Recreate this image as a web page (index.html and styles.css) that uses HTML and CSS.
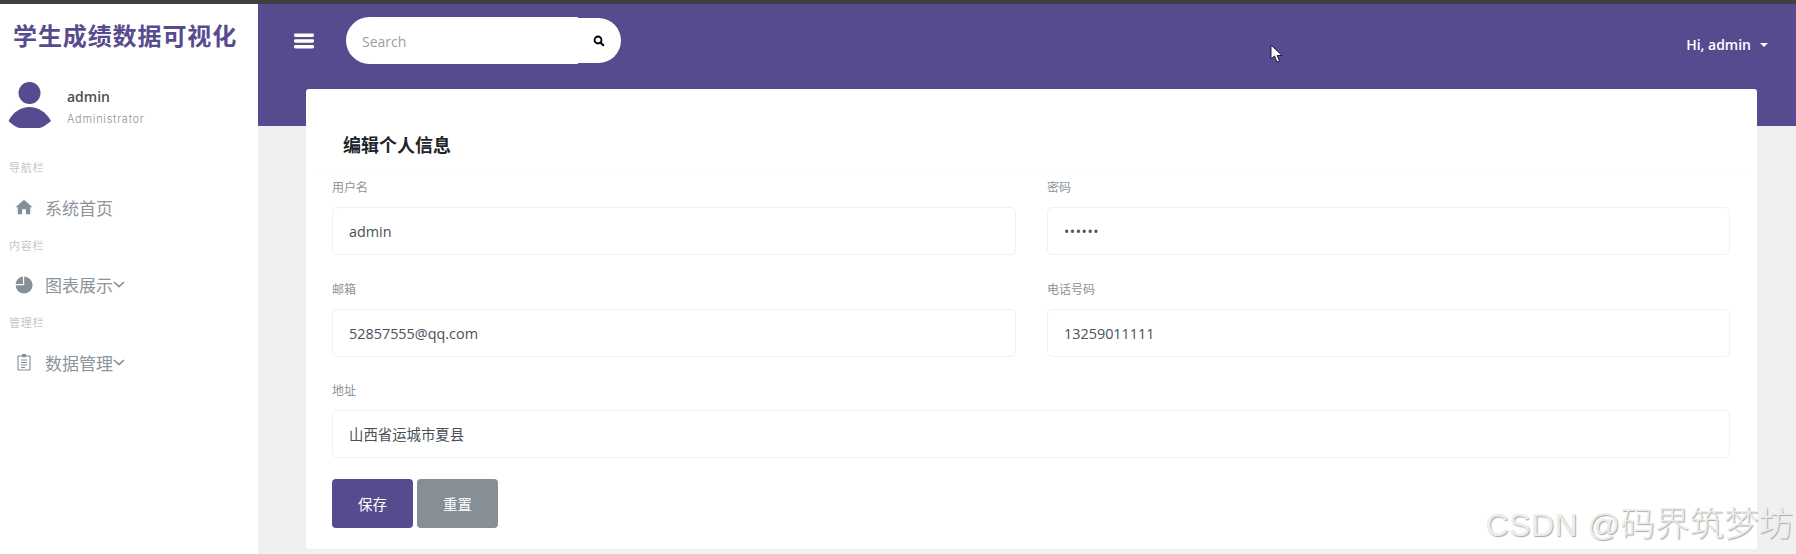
FILE: index.html
```html
<!DOCTYPE html>
<html lang="zh-CN">
<head>
    <meta charset="UTF-8">
    <title>学生成绩数据可视化</title>
    <link rel="stylesheet" href="styles.css">
</head>
<body>

<div class="topline"></div>

<div class="wrapper">
    <!-- Sidebar -->
    <aside class="sidebar">
        <div class="brand">学生成绩数据可视化</div>
        <div class="user">
            <svg class="avatar" width="44" height="48" viewBox="0 0 44 48">
                <circle cx="21.5" cy="13" r="11" fill="#574b90"/>
                <path d="M0.5 41 C5 32 13 27 21.5 27 C30 27 38 32 43 41 C38 45 34 48 31 48 L12 48 C9 48 5 45 0.5 41 Z" fill="#574b90"/>
            </svg>
            <div class="user-info">
                <div class="user-name">admin</div>
                <div class="user-role">Administrator</div>
            </div>
        </div>

        <div class="nav-title">导航栏</div>
        <a class="nav-item">
            <svg class="nav-icon" viewBox="0 0 16 16"><path d="M8 1.5 L15.5 8.2 L13.6 8.2 L13.6 14.5 L9.7 14.5 L9.7 10 L6.3 10 L6.3 14.5 L2.4 14.5 L2.4 8.2 L0.5 8.2 Z" fill="#868e96"/></svg>
            <span>系统首页</span>
        </a>

        <div class="nav-title">内容栏</div>
        <a class="nav-item">
            <svg class="nav-icon" viewBox="0 0 18 18"><path d="M9.2 0.6 A8.5 8.5 0 1 1 0.6 9.3 L9.2 9.3 Z M7.9 0.6 L7.9 8 L0.6 8 A8 8 0 0 1 7.9 0.6 Z" fill="#868e96"/></svg>
            <span>图表展示</span>
            <svg class="chevron" width="12" height="7" viewBox="0 0 12 7"><path d="M1 1 L6 5.6 L11 1" fill="none" stroke="#868e96" stroke-width="1.6"/></svg>
        </a>

        <div class="nav-title">管理栏</div>
        <a class="nav-item">
            <svg class="nav-icon" viewBox="0 0 16 18"><path d="M2 3 H14 V17 H2 Z M5 7 H11 M5 9.5 H11 M5 12 H11 M5 14.5 H9" fill="none" stroke="#868e96" stroke-width="1.1"/><rect x="6" y="1" width="4" height="3.2" fill="#868e96"/></svg>
            <span>数据管理</span>
            <svg class="chevron" width="12" height="7" viewBox="0 0 12 7"><path d="M1 1 L6 5.6 L11 1" fill="none" stroke="#868e96" stroke-width="1.6"/></svg>
        </a>
    </aside>

    <!-- Main -->
    <main class="main">
        <header class="panel-header">
            <div class="header-left">
                <svg class="menu-icon" width="20" height="16" viewBox="0 0 20 16">
                    <rect x="0" y="0.5" width="20" height="3.4" rx="1.4" fill="#fff"/>
                    <rect x="0" y="6.3" width="20" height="3.4" rx="1.4" fill="#fff"/>
                    <rect x="0" y="12.1" width="20" height="3.4" rx="1.4" fill="#fff"/>
                </svg>
                <div class="search">
                    <div class="search-input">Search</div>
                    <div class="search-btn">
                        <svg width="12" height="12" viewBox="0 0 12 12"><circle cx="5" cy="5" r="3.5" fill="none" stroke="#000" stroke-width="1.8"/><path d="M7.5 7.5 L10.8 10.8" stroke="#000" stroke-width="2.2"/></svg>
                    </div>
                </div>
            </div>
            <div class="header-user">Hi, admin<span class="caret"></span></div>
        </header>

        <section class="card">
            <h1 class="card-title">编辑个人信息</h1>
            <form class="form-grid">
                <div class="field">
                    <label>用户名</label>
                    <div class="input">admin</div>
                </div>
                <div class="field">
                    <label>密码</label>
                    <div class="input input-dots">••••••</div>
                </div>
                <div class="field">
                    <label>邮箱</label>
                    <div class="input">52857555@qq.com</div>
                </div>
                <div class="field">
                    <label>电话号码</label>
                    <div class="input">13259011111</div>
                </div>
                <div class="field field-wide">
                    <label>地址</label>
                    <div class="input">山西省运城市夏县</div>
                </div>
            </form>
            <div class="buttons">
                <button type="button" class="btn btn-primary">保存</button>
                <button type="button" class="btn btn-reset">重置</button>
            </div>
        </section>
    </main>
</div>

<!-- Mouse cursor caught in the screenshot -->
<svg class="cursor" width="14" height="20" viewBox="0 0 14 20">
    <path d="M1 1 L1 15 L4.5 12 L7 18 L9.5 17 L7.2 11.5 L12 11.5 Z" fill="#fff" stroke="#1d1b3a" stroke-width="1"/>
</svg>

<div class="watermark">CSDN @<span class="watermark-cn">码界筑梦坊</span></div>

</body>
</html>
```

FILE: styles.css
```css
/* Global Styles */
body {
    margin: 0;
    height: 554px;
    overflow: hidden;
    background-color: #f0f0f2;
    font-family: "Open Sans", "Noto Sans CJK SC", sans-serif;
    color: #495057;
}

.topline {
    height: 4px;
    background-color: #3f3f42;
}

.wrapper {
    display: flex;
    height: 550px;
}

/* Sidebar */
.sidebar {
    width: 258px;
    flex-shrink: 0;
    background-color: #ffffff;
}

.brand {
    height: 64px;
    line-height: 64px;
    padding-left: 13px;
    font-size: 24px;
    font-weight: 700;
    letter-spacing: 0.9px;
    color: #574b90;
    white-space: nowrap;
}

.user {
    display: flex;
    align-items: flex-end;
    height: 60px;
    margin-bottom: 31px;
    padding-left: 8px;
}

.user-info {
    margin-left: 15px;
}

.user-name {
    font-size: 14px;
    font-weight: 600;
    line-height: 20px;
    margin-bottom: 3px;
}

.user-role {
    font-family: "Inter", sans-serif;
    font-size: 11px;
    font-weight: 300;
    line-height: 18px;
    letter-spacing: 0.75px;
    color: #8f9398;
}

.nav-title {
    height: 16px;
    line-height: 16px;
    padding-left: 9px;
    font-family: "Noto Sans CJK SC", sans-serif;
    font-size: 11px;
    letter-spacing: 0.8px;
    color: #c4c6c9;
}

.nav-item {
    display: flex;
    align-items: center;
    height: 48px;
    margin: 8px 0 5.6px;
    padding-left: 15px;
    font-family: "Noto Sans CJK SC", sans-serif;
    font-size: 17px;
    color: #8d949b;
}

.nav-icon {
    width: 18px;
    height: 18px;
    margin-right: 12px;
}

/* Header */
.main {
    flex: 1;
    min-width: 0;
}

.panel-header {
    display: flex;
    justify-content: space-between;
    height: 122px;
    padding: 13px 28px 0 36px;
    box-sizing: border-box;
    background-color: #574b90;
}

.header-left {
    display: flex;
    align-items: flex-start;
}

.menu-icon {
    margin: 16px 32px 0 0;
}

.search {
    display: flex;
    align-items: center;
    width: 275px;
    height: 47px;
}

.search-input {
    width: 232px;
    height: 47px;
    padding-left: 16px;
    box-sizing: border-box;
    line-height: 50px;
    font-size: 14px;
    color: #9a9ea3;
    background-color: #ffffff;
    border-radius: 24px 0 0 24px;
}

.search-btn {
    display: flex;
    align-items: center;
    justify-content: flex-start;
    width: 43px;
    height: 45px;
    padding-left: 15px;
    box-sizing: border-box;
    background-color: #ffffff;
    border-radius: 0 23px 23px 0;
}

.header-user {
    height: 24px;
    margin-top: 16px;
    line-height: 24px;
    font-size: 14px;
    font-weight: 600;
    color: #ffffff;
}

.caret {
    display: inline-block;
    margin-left: 9px;
    vertical-align: 3px;
    border-top: 4px solid #ffffff;
    border-left: 4px solid transparent;
    border-right: 4px solid transparent;
}

/* Card */
.card {
    position: relative;
    margin: -37px 39px 0 48px;
    height: 460px;
    padding: 0 27px 0 26px;
    box-sizing: border-box;
    background-color: #ffffff;
    border-radius: 3px;
}

.card-title {
    margin: 0 -15px 0 -15px;
    height: 85px;
    padding: 41px 0 0 26px;
    box-sizing: border-box;
    line-height: 28px;
    font-size: 18px;
    font-weight: 700;
    color: #212529;
    font-family: "Noto Sans CJK SC", sans-serif;
    border-bottom: 1px solid #fcfcfc;
}

.form-grid {
    display: grid;
    grid-template-columns: 684px 683px;
    column-gap: 31px;
    row-gap: 21.5px;
    margin-top: 1px;
}

.field-wide {
    grid-column: 1 / 3;
}

label {
    display: block;
    height: 32px;
    line-height: 24px;
    font-family: "Noto Sans CJK SC", sans-serif;
    font-size: 12px;
    color: #8d9398;
}

.input {
    height: 48px;
    padding-left: 16px;
    box-sizing: border-box;
    line-height: 47px;
    font-size: 14.4px;
    color: #495057;
    background-color: #ffffff;
    border: 1px solid #f1f1f3;
    border-radius: 5px;
}

.input-dots {
    font-size: 14px;
    letter-spacing: 0.6px;
}

.buttons {
    display: flex;
    gap: 4px;
    margin-top: 21px;
}

.btn {
    width: 81px;
    height: 49px;
    padding: 0;
    border: none;
    border-radius: 4px;
    color: #ffffff;
    font-family: "Noto Sans CJK SC", sans-serif;
    font-size: 14.4px;
}

.btn-primary {
    background-color: #574b90;
}

.btn-reset {
    background-color: #868e96;
}

/* Things lying over the page */
.cursor {
    position: absolute;
    left: 1270px;
    top: 44px;
}

.watermark {
    position: absolute;
    right: 3px;
    bottom: 7px;
    font-family: "Liberation Sans", "Noto Sans CJK SC", sans-serif;
    font-size: 32px;
    letter-spacing: 0.5px;
    line-height: 44px;
    white-space: nowrap;
    color: #ececec;
    text-shadow: 1px 1px 1px #a8a8a8;
}

.watermark-cn {
    font-size: 34.5px;
    font-weight: 300;
    letter-spacing: 0;
}
```
